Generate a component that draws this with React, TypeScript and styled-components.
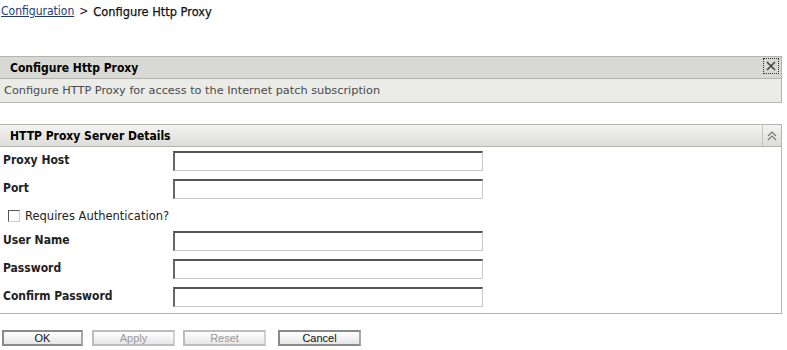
import React from "react";
import styled, { createGlobalStyle } from "styled-components";

const Global = createGlobalStyle`
  html, body { margin: 0; padding: 0; background: #fff; }
  body { font-family: "DejaVu Sans Condensed", "Liberation Sans", sans-serif; color: #000; }
`;

const Page = styled.div`
  width: 787px;
  height: 350px;
  overflow: hidden;
  display: flex;
  flex-direction: column;
`;

const Breadcrumb = styled.div`
  height: 20px;
  padding: 1px 0 0 1px;
  display: flex;
  align-items: center;
  font-size: 12px;
  color: #111;
  gap: 5px;
`;

const CrumbLink = styled.a`
  color: #1f3a7a;
  text-decoration: underline;
`;

const CrumbCurrent = styled.span`
  font-size: 12.7px;
  -webkit-text-stroke: 0.25px #111;
`;

const Panel = styled.div<{ $mt: number }>`
  margin-top: ${(p) => p.$mt}px;
  width: 781px;
  border: 1px solid #b4b4b0;
  border-left: none;
  display: flex;
  flex-direction: column;
`;

const Header = styled.div<{ $grad?: boolean }>`
  height: 21px;
  display: flex;
  align-items: center;
  justify-content: space-between;
  background: ${(p) => (p.$grad ? "linear-gradient(#f3f3f1, #dcdcd9)" : "#d8d8d4")};
  border-bottom: 1px solid #b4b4b0;
  padding-left: 10px;
  font-weight: bold;
  font-size: 12px;
`;

const Desc = styled.div`
  height: 23px;
  background: #ebebe8;
  display: flex;
  align-items: center;
  padding-left: 4px;
  font-family: "DejaVu Sans", Verdana, sans-serif;
  font-size: 11.3px;
  color: #4a4a4a;
`;

const CloseBtn = styled.div`
  width: 14px;
  height: 14px;
  margin-right: 2px;
  align-self: flex-start;
  margin-top: 1px;
  border: 1px dotted #333;
  display: flex;
  align-items: center;
  justify-content: center;
`;

const CollapseBtn = styled.div`
  width: 18px;
  height: 21px;
  border-left: 1px solid #c4c4c0;
  display: flex;
  align-items: center;
  justify-content: center;
`;

const Body = styled.div`
  background: #fff;
  padding: 0 0 2px 3px;
  display: flex;
  flex-direction: column;
`;

const Row = styled.div`
  height: 28px;
  display: flex;
  align-items: center;
`;

const Label = styled.label`
  width: 170px;
  font-size: 12px;
  font-weight: bold;
  color: #222;
  margin-top: -3px;
`;

const Input = styled.div`
  width: 307px;
  height: 17px;
  border-top: 2px solid #555;
  border-left: 2px solid #666;
  border-right: 1px solid #c8c8c8;
  border-bottom: 1px solid #c8c8c8;
  background: #fff;
`;

const CheckRow = styled.div`
  height: 24px;
  display: flex;
  align-items: center;
  gap: 5px;
  padding: 2px 0 0 5px;
  box-sizing: border-box;
  font-family: "DejaVu Sans", Verdana, sans-serif;
  font-size: 11.5px;
  color: #222;
`;

const Box = styled.span`
  width: 10px;
  height: 10px;
  border: 1px solid #555;
  border-right-color: #ccc;
  border-bottom-color: #ccc;
  background: #fff;
`;

const Buttons = styled.div`
  margin-top: 16px;
  display: flex;
  padding-left: 2px;
`;

const Button = styled.div<{ $disabled?: boolean; $w: number; $ml: number }>`
  width: ${(p) => p.$w}px;
  height: 12px;
  margin-left: ${(p) => p.$ml}px;
  border: 2px solid ${(p) => (p.$disabled ? "#bdbdbd" : "#8a8a8a")};
  border-right-color: ${(p) => (p.$disabled ? "#d0d0d0" : "#a8a8a8")};
  background: linear-gradient(#ffffff, #e6e6e6);
  font-family: "Liberation Sans", Arial, sans-serif;
  font-size: 11px;
  display: flex;
  align-items: center;
  justify-content: center;
  color: ${(p) => (p.$disabled ? "#999" : "#111")};
`;

export default function App() {
  return (
    <Page>
      <Global />
      <Breadcrumb>
        <CrumbLink>Configuration</CrumbLink>
        <span>&gt;</span>
        <CrumbCurrent>Configure Http Proxy</CrumbCurrent>
      </Breadcrumb>
      <Panel $mt={35}>
        <Header>
          <span>Configure Http Proxy</span>
          <CloseBtn>
            <svg width="10" height="10" viewBox="0 0 10 10">
              <path d="M1 1 L9 9 M9 1 L1 9" stroke="#444" strokeWidth="1.6" />
            </svg>
          </CloseBtn>
        </Header>
        <Desc>Configure HTTP Proxy for access to the Internet patch subscription</Desc>
      </Panel>
      <Panel $mt={21}>
        <Header $grad>
          <span>HTTP Proxy Server Details</span>
          <CollapseBtn>
            <svg width="10" height="10" viewBox="0 0 10 10">
              <path d="M1 5 L5 1 L9 5 M1 9 L5 5 L9 9" stroke="#777" strokeWidth="1.2" fill="none" />
            </svg>
          </CollapseBtn>
        </Header>
        <Body>
          <Row>
            <Label>Proxy Host</Label>
            <Input />
          </Row>
          <Row>
            <Label>Port</Label>
            <Input />
          </Row>
          <CheckRow>
            <Box />
            <span>Requires Authentication?</span>
          </CheckRow>
          <Row>
            <Label>User Name</Label>
            <Input />
          </Row>
          <Row>
            <Label>Password</Label>
            <Input />
          </Row>
          <Row>
            <Label>Confirm Password</Label>
            <Input />
          </Row>
        </Body>
      </Panel>
      <Buttons>
        <Button $w={77} $ml={0}>OK</Button>
        <Button $w={79} $ml={9} $disabled>Apply</Button>
        <Button $w={79} $ml={8} $disabled>Reset</Button>
        <Button $w={79} $ml={12}>Cancel</Button>
      </Buttons>
    </Page>
  );
}
